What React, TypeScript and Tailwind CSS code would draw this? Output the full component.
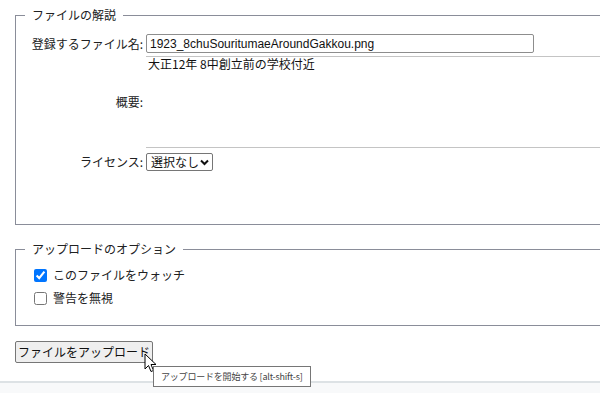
import React from "react";

const font = "font-['Noto_Sans_CJK_JP','Liberation_Sans',sans-serif]";

const Legend = ({ children }: { children: React.ReactNode }) => (
  <legend className="ml-[9px] px-[7px] text-[12px] leading-[14px] text-[#202122]">
    {children}
  </legend>
);

const Row = ({ label, children }: { label: string; children: React.ReactNode }) => (
  <div className="flex items-center">
    <div className="w-[127px] shrink-0 text-right text-[12px] leading-[14px] text-[#202122]">
      {label}
    </div>
    <div className="ml-[3px] flex-1">{children}</div>
  </div>
);

const Cursor = () => (
  <svg
    className="absolute left-[144px] top-[353px]"
    width="14"
    height="21"
    viewBox="0 0 14 21"
  >
    <path
      d="M1 1 L1 16 L4.5 12.5 L7 18.5 L9.5 17.5 L7 11.5 L12 11.5 Z"
      fill="#fff"
      stroke="#000"
      strokeWidth="1"
      strokeLinejoin="round"
    />
  </svg>
);

export default function App() {
  return (
    <div className={`relative flex h-[393px] w-[600px] flex-col overflow-hidden bg-white ${font}`}>
      {/* file description */}
      <fieldset className="ml-[15px] mt-[8px] w-[640px] border border-[#8a8d99]">
        <Legend>ファイルの解説</Legend>
        <div className="flex flex-col pb-[53px] pt-[12px]">
          <Row label="登録するファイル名:">
            <div className="flex h-[19px] w-[388px] items-center rounded-[2px] border border-[#8d8d8d] px-[3px] font-['Liberation_Sans',sans-serif] text-[12px] text-[#111]">
              1923_8chuSouritumaeAroundGakkou.png
            </div>
          </Row>
          <div className="mt-[3px]">
            <Row label="概要:">
              <div className="h-[92px] border-y border-[#c4c4c4] px-[2px] text-[12px] leading-[14px] text-[#111]">
                大正12年 8中創立前の学校付近
              </div>
            </Row>
          </div>
          <div className="mt-[5px]">
            <Row label="ライセンス:">
              <div className="flex h-[18px] w-[67px] items-center justify-between rounded-[2px] border border-[#767676] pl-[4px] pr-[3px] text-[12px] text-[#111]">
                <span>選択なし</span>
                <svg width="9" height="7" viewBox="0 0 9 7">
                  <path d="M1 1.5 L4.5 5 L8 1.5" fill="none" stroke="#111" strokeWidth="2" />
                </svg>
              </div>
            </Row>
          </div>
        </div>
      </fieldset>

      {/* upload options */}
      <fieldset className="ml-[15px] mt-[17px] w-[640px] border border-[#8a8d99]">
        <Legend>アップロードのオプション</Legend>
        <div className="flex flex-col gap-[9px] pb-[20px] pl-[18px] pt-[12px] text-[12px] leading-[14px] text-[#202122]">
          <label className="flex items-center gap-[6px]">
            <input type="checkbox" defaultChecked className="h-[13px] w-[13px] accent-[#0075ff]" />
            <span>このファイルをウォッチ</span>
          </label>
          <label className="flex items-center gap-[6px]">
            <input type="checkbox" className="h-[13px] w-[13px]" />
            <span>警告を無視</span>
          </label>
        </div>
      </fieldset>

      <div className="ml-[15px] mt-[12px]">
        <button className="h-[22px] w-[138px] rounded-[2px] border border-[#767676] bg-[#efefef] text-[12px] text-[#111]">
          ファイルをアップロード
        </button>
      </div>

      <div className="mt-[18px] flex-1 border-t-2 border-[#dde2e5] bg-[#f8f9fa]" />

      <Cursor />
      <div className="absolute left-[153px] top-[366px] flex h-[21px] items-center whitespace-nowrap border border-[#767676] bg-white px-[7px] text-[9px] tracking-[-0.2px] text-[#444]">
        アップロードを開始する [alt-shift-s]
      </div>
    </div>
  );
}
